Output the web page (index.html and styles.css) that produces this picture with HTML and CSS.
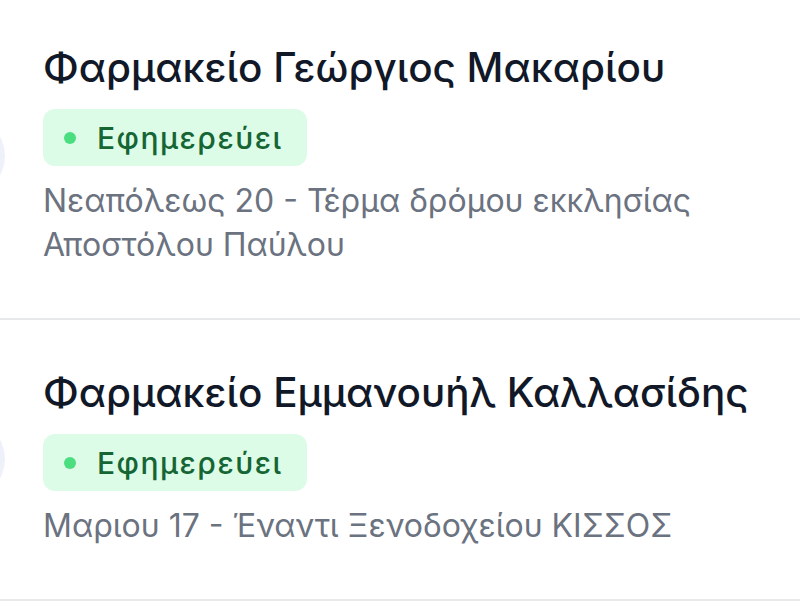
FILE: index.html
```html
<!DOCTYPE html>
<html lang="el">
<head>
<meta charset="utf-8">
<title>Φαρμακεία</title>
<link rel="stylesheet" href="styles.css">
</head>
<body>
<ul class="list">
  <li class="item">
    <div class="avatar"></div>
    <div class="info">
      <h2 class="name">Φαρμακείο Γεώργιος Μακαρίου</h2>
      <span class="badge"><span class="dot"></span>Εφημερεύει</span>
      <p class="address">Νεαπόλεως 20 - Τέρμα δρόμου εκκλησίας Αποστόλου Παύλου</p>
    </div>
  </li>
  <li class="item">
    <div class="avatar"></div>
    <div class="info">
      <h2 class="name">Φαρμακείο Εμμανουήλ Καλλασίδης</h2>
      <span class="badge"><span class="dot"></span>Εφημερεύει</span>
      <p class="address">Μαριου 17 - Έναντι Ξενοδοχείου ΚΙΣΣΟΣ</p>
    </div>
  </li>
</ul>
</body>
</html>
```
FILE: styles.css
```css
html, body {
  margin: 0;
  padding: 0;
  background: #ffffff;
  overflow: hidden;
}
body {
  font-family: Inter, "Noto Sans", sans-serif;
}
.list {
  list-style: none;
  margin: -5px 0 0 0;
  padding: 0;
}
.item {
  display: flex;
  align-items: center;
  gap: 38px;
  padding: 49px 20px 51px 0;
  border-bottom: 2px solid #e8e9eb;
}
.avatar {
  flex: none;
  width: 80px;
  height: 80px;
  margin-left: -75px;
  border-radius: 50%;
  background: #eef1fa;
}
.info {
  display: flex;
  flex-direction: column;
  align-items: flex-start;
  min-width: 0;
}
.name {
  margin: 0;
  font-size: 40.4px;
  line-height: 48px;
  font-weight: 500;
  color: #111827;
}
.badge {
  display: inline-flex;
  align-items: center;
  gap: 21px;
  margin-top: 17px;
  height: 57px;
  box-sizing: border-box;
  padding: 0 24px 0 21px;
  border-radius: 12px;
  background: #dcfce7;
  color: #166534;
  font-size: 30px;
  font-weight: 500;
  letter-spacing: 1.5px;
}
.dot {
  width: 12px;
  height: 12px;
  border-radius: 50%;
  background: #4ade80;
}
.address {
  margin: 13px 0 0 0;
  font-size: 32px;
  line-height: 44px;
  color: #6b7280;
}
```
